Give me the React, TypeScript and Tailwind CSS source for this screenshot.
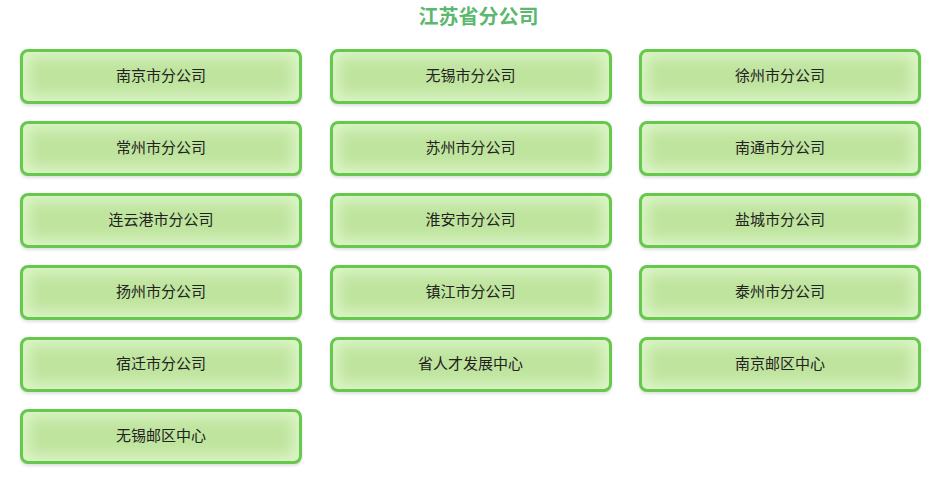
import React from 'react';

const branches = [
  '南京市分公司',
  '无锡市分公司',
  '徐州市分公司',
  '常州市分公司',
  '苏州市分公司',
  '南通市分公司',
  '连云港市分公司',
  '淮安市分公司',
  '盐城市分公司',
  '扬州市分公司',
  '镇江市分公司',
  '泰州市分公司',
  '宿迁市分公司',
  '省人才发展中心',
  '南京邮区中心',
  '无锡邮区中心',
];

const App = () => {
  return (
    <div className="min-h-[480px] bg-white font-['Noto_Sans_CJK_SC',sans-serif]">
      <h1 className="pt-[3px] pl-[22px] text-center text-[20px] font-bold leading-[26px] text-[#5cb86e]">
        江苏省分公司
      </h1>
      <div className="ml-[20px] mt-[20px] grid w-[901px] grid-cols-[282px_282px_282px] gap-x-[27.5px] gap-y-[17px]">
        {branches.map((name) => (
          <button
            key={name}
            type="button"
            className="flex h-[55px] items-center justify-center rounded-[8px] border-[3px] border-[#66c84c] bg-[#bfe49e] pb-[2px] text-[15px] text-[#222] shadow-[inset_0_0_14px_6px_#dcf5c8,0_2px_3px_rgba(0,0,0,0.12)]"
          >
            {name}
          </button>
        ))}
      </div>
    </div>
  );
};

export default App;
